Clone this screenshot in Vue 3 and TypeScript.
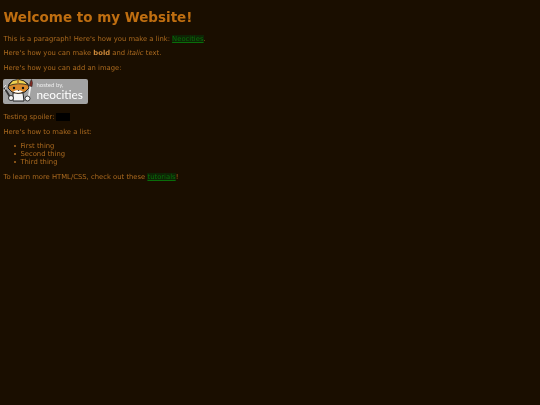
<script setup lang="ts">
const items: string[] = ['First thing', 'Second thing', 'Third thing']
</script>

<template>
  <main class="page">
    <h1 class="title">Welcome to my Website!</h1>
    <p>This is a paragraph! Here's how you make a link: <a href="#">Neocities</a>.</p>
    <p>Here's how you can make <strong>bold</strong> and <em>italic</em> text.</p>
    <p>Here's how you can add an image:</p>
    <div class="badge">
      <svg class="cat" viewBox="0 0 32 25" width="32" height="25" aria-hidden="true">
        <path d="M1 9 L4 13 L7 18" stroke="#333" stroke-width="1.800" fill="none"/>
        <path d="M1 8 L3 6 M3 9 L1 12" stroke="#ddd" stroke-width="1"/>
        <path d="M10 14 Q15 13 20 14 L21 22 L10 22 Z" fill="#f4f4f4" stroke="#222" stroke-width="1"/>
        <circle cx="8" cy="19" r="2.500" fill="#f6f6f6" stroke="#222" stroke-width=".9"/>
        <path d="M6 5 L9 2 Q15 0 21 2 L25 5 L26 9 L22 13 Q15 16 9 13 L5 9 Z" fill="#d98a2c" stroke="#222" stroke-width="1"/>
        <path d="M5 7 Q15 3 25 6 L21 2 L16 .5 L10 1.500 Z" fill="#f0d24f" stroke="#222" stroke-width=".8"/>
        <path d="M14 .5 L16 .5 L16 4.500 L14 4.500 Z" fill="#b9822a"/>
        <path d="M10 12.500 Q15 9.500 20 12.500 Q15 15 10 12.500Z" fill="#fff"/>
        <circle cx="11" cy="9" r="1.200" fill="#111"/>
        <circle cx="20" cy="9" r="1.200" fill="#111"/>
        <path d="M14.500 11 h2 l-1 1.100 Z" fill="#111"/>
        <path d="M25.500 19 L27.500 7" stroke="#eee" stroke-width="1.600"/>
        <path d="M26.500 7 Q27 2 28.500 .5 Q30 3 29 7.500 Z" fill="#8a2a20" stroke="#222" stroke-width=".6"/>
        <circle cx="24.500" cy="19.500" r="2.500" fill="#f6f6f6" stroke="#222" stroke-width=".9"/>
      </svg>
      <div class="badge-text">
        <span class="hosted">hosted by,</span>
        <span class="brand">neocities</span>
      </div>
    </div>
    <p class="spoiler-row">Testing spoiler: <span class="spoiler"></span></p>
    <p>Here's how to make a list:</p>
    <ul>
      <li v-for="item in items" :key="item">{{ item }}</li>
    </ul>
    <p>To learn more HTML/CSS, check out these <a href="#">tutorials</a>!</p>
  </main>
</template>

<style scoped>
.page {
  min-height: 405px;
  box-sizing: border-box;
  padding: 3.400px;
  background: #1a0e00;
  color: #ab6a1e;
  font-family: "DejaVu Sans", sans-serif;
  font-size: 6.820px;
  overflow: hidden;
  filter: blur(.25px);
}
.title {
  margin: 5.500px 0 9.800px;
  font-size: 13.500px;
  color: #bf6e10;
}
p {
  margin: 6.750px 0;
}
a {
  color: #0a6d0a;
  background: #0e2405;
}
strong {
  color: #cc8838;
}
.badge {
  display: flex;
  align-items: center;
  gap: 1px;
  width: 85px;
  height: 25px;
  box-sizing: border-box;
  background: #a3a3a3;
  border-radius: 2px;
  margin: 3px 0 9px;
  color: #fff;
}
.cat {
  flex: none;
}
.badge-text {
  display: flex;
  flex-direction: column;
  gap: 1px;
  font-family: "Lato", sans-serif;
  line-height: 1;
}
.hosted {
  font-size: 6px;
  color: #ececec;
}
.brand {
  font-size: 11.800px;
  color: #fff;
}
.spoiler-row {
  margin-bottom: 5.750px;
}
.spoiler {
  display: inline-block;
  width: 14px;
  height: 8px;
  margin-left: -1px;
  vertical-align: top;
  background: #000;
}
ul {
  margin: 6.750px 0;
  padding-left: 17px;
  list-style: none;
}
li {
  position: relative;
}
li::before {
  content: "";
  position: absolute;
  left: -6px;
  top: 3px;
  width: 2px;
  height: 2px;
  border-radius: 50%;
  background: #ab6a1e;
}
</style>

<style>
html,
body {
  background: #1a0e00;
}
</style>
